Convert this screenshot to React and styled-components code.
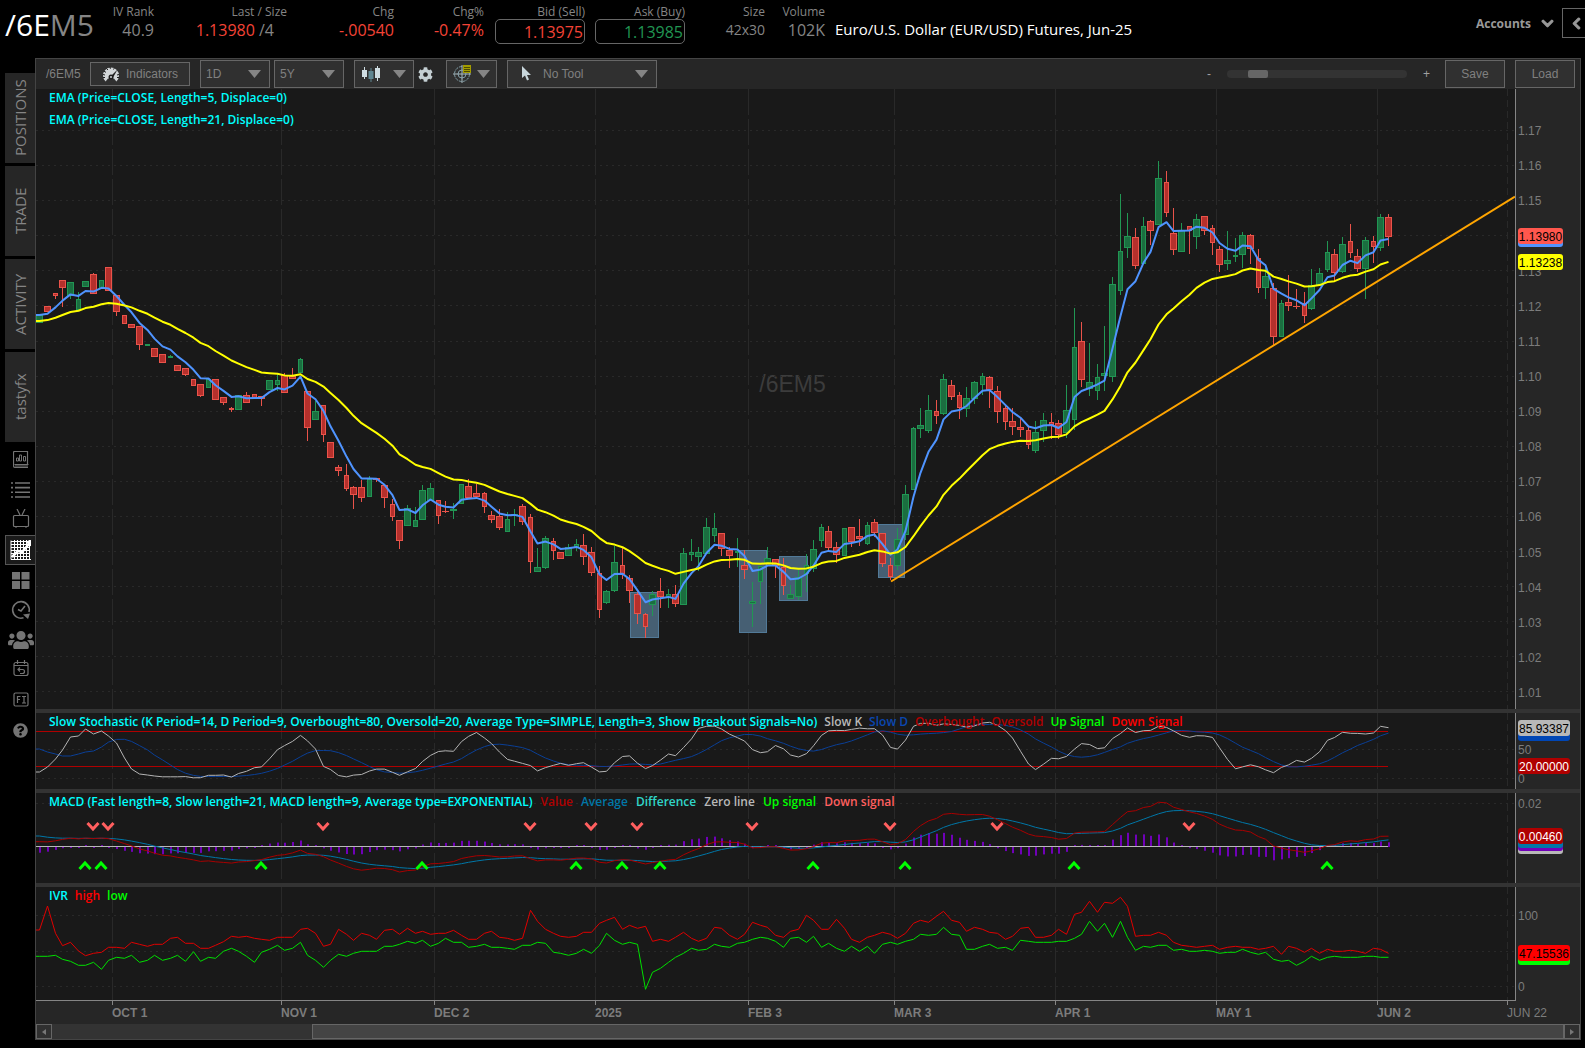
import React from 'react'
import styled, { createGlobalStyle } from 'styled-components'
import { FaChevronDown, FaChevronLeft, FaCog, FaQuestionCircle, FaUsers } from 'react-icons/fa'

// kind, high, body top, body bottom, low (all in plot rows)
const CANDLES = `
G 315 315 322 322|R 306 306 311 311|R 293 293 295 298|R 280 280 287 306|G 282 282 295 298|G 292 299 309 309
G 281 281 286 286|R 273 274 293 293|G 280 280 288 288|R 267 267 290 290|R 295 295 311 315|R 315 315 323 323
R 324 324 327 327|R 326 326 344 349|G 344 344 345 345|R 348 348 356 356|R 354 354 362 362|G 355 356 357 357
R 365 365 370 370|R 368 368 374 375|R 379 379 385 385|R 384 384 395 396|G 379 379 387 387|R 379 379 399 399
R 397 397 402 404|R 407 408 409 411|G 395 395 409 409|R 392 395 402 402|R 394 394 398 398|R 396 396 398 405
G 380 380 389 389|G 374 380 384 390|R 373 375 392 392|R 368 376 378 378|G 358 359 372 372
R 391 391 427 440|G 401 411 419 419|R 405 405 434 441|R 442 442 457 457|R 465 467 470 475|R 464 475 488 490
R 486 487 494 508|R 480 487 497 501|G 476 479 496 496|R 478 478 479 481|R 485 485 497 507|R 499 504 516 520
R 520 520 540 548|G 505 508 525 525|G 507 520 526 526|G 485 490 519 519|G 483 488 500 500|R 500 500 515 523
R 501 511 511 512|G 503 509 510 518|G 484 484 503 503|R 479 486 497 497|R 484 493 496 496|R 492 493 506 512
R 511 515 519 522|R 509 516 527 529|G 512 519 531 531|G 509 514 515 525|R 504 506 521 524|R 514 517 561 572
G 548 567 571 571|G 536 538 567 568|R 538 541 550 559|R 552 552 558 558|G 544 547 555 555|G 539 544 547 550
R 534 545 556 564|R 547 552 572 575|R 566 573 609 617|G 590 591 602 603|G 546 562 590 591|R 547 565 573 578
R 575 578 590 602|R 592 594 613 623|R 613 614 626 637|G 591 594 604 615|R 578 591 596 607|G 589 594 597 607
R 585 594 603 606|G 548 553 604 604|G 539 552 554 560|G 547 552 556 570|G 518 527 553 553|G 513 528 535 541
R 533 533 548 555|R 547 550 555 567|G 538 551 552 566|R 550 565 569 578|G 582 601 603 626|G 566 566 581 603
G 547 558 563 563|R 559 559 565 577|R 558 567 585 594|G 585 594 598 598|G 570 577 596 599|G 554 565 573 591
G 540 549 568 571|G 524 527 540 546|R 526 531 547 550|R 542 547 554 562|G 528 528 555 555|R 527 527 541 546
R 519 536 538 545|G 522 525 543 544|R 519 522 532 536|R 533 533 563 566|R 558 565 576 579|G 528 539 565 569
G 485 494 534 539|G 427 428 489 489|G 408 425 428 437|G 395 410 430 432|R 400 411 415 423|G 374 379 413 414
R 380 385 396 399|R 392 395 407 418|G 387 398 408 416|G 381 382 398 403|G 373 376 384 394|R 376 377 389 407
R 386 391 411 422|R 406 408 421 429|R 408 421 426 434|R 418 427 429 436|R 427 430 444 448|G 421 432 450 452
G 413 420 430 441|R 413 422 424 438|R 420 423 434 438|G 385 410 432 437|G 308 347 419 429|R 322 341 379 386
G 343 382 388 395|G 364 377 390 399|G 326 373 375 390|G 277 284 376 381|G 194 251 290 294|G 213 236 247 257
R 228 237 265 268|G 217 226 263 263|R 220 221 230 244|G 161 178 224 224|R 171 182 212 216|R 208 233 249 254
G 223 230 251 251|R 226 226 230 253|G 214 219 236 248|R 216 216 230 234|R 225 228 242 254|R 246 249 264 271
G 231 260 263 269|G 238 255 256 261|G 232 235 254 267|R 234 235 248 263|R 249 258 287 292|G 264 276 287 298
R 283 288 336 344|G 300 303 336 336|R 275 302 305 310|R 289 306 306 308|R 292 303 315 322|G 269 285 308 309
G 268 273 285 285|G 241 252 269 271|R 249 254 272 281|G 237 244 271 272|R 224 241 252 257|R 249 256 268 271
G 237 240 268 298|R 236 241 246 262|G 214 217 247 250|R 214 217 236 245`
  .trim()
  .split(/[|\n]/)
  .map((row) => {
    const [kind, ...rest] = row.split(' ')
    const [high, top, bottom, low] = rest.map(Number)
    return { up: kind === 'G', high, top, bottom, low, close: kind === 'G' ? top : bottom }
  })

// rows in thirds of a pixel, counted from y = 700
const IVR_HIGH = [
  690, 618, 700, 737, 727, 753, 767, 760, 757, 742, 742, 745, 727, 733, 739, 733, 733, 715, 712, 730,
  730, 745, 745, 736, 725, 709, 712, 709, 715, 718, 721, 712, 712, 712, 688, 685, 700, 739, 733, 688,
  703, 721, 700, 706, 718, 691, 688, 703, 685, 700, 694, 703, 700, 700, 691, 706, 718, 718, 700, 694,
  712, 715, 721, 715, 631, 664, 688, 700, 709, 712, 709, 697, 697, 670, 661, 652, 688, 676, 685, 679,
  724, 718, 724, 712, 697, 715, 724, 715, 682, 685, 706, 718, 703, 667, 676, 682, 706, 712, 694, 688,
  646, 661, 688, 688, 658, 685, 718, 727, 712, 706, 697, 703, 715, 700, 670, 661, 667, 649, 634, 661,
  667, 694, 682, 688, 697, 700, 718, 709, 685, 682, 712, 712, 706, 688, 703, 643, 637, 604, 637, 607,
  610, 592, 619, 709, 706, 706, 697, 706, 727, 736, 739, 742, 739, 736, 748, 742, 739, 742, 742, 748,
  745, 739, 763, 739, 745, 757, 745, 760, 748, 754, 754, 751, 754, 760, 745, 748, 760,
]
const IVR_LOW = [
  769, 769, 766, 778, 784, 796, 796, 787, 808, 781, 772, 775, 766, 787, 781, 766, 781, 775, 766, 784,
  755, 784, 772, 775, 754, 745, 754, 769, 787, 757, 748, 736, 751, 745, 727, 766, 781, 802, 781, 763,
  769, 760, 754, 754, 754, 739, 739, 733, 724, 730, 721, 739, 730, 715, 727, 727, 742, 739, 733, 742,
  742, 745, 748, 736, 736, 727, 730, 757, 760, 766, 760, 748, 760, 736, 700, 721, 733, 727, 733, 868,
  817, 805, 787, 772, 760, 745, 751, 748, 733, 739, 742, 730, 727, 718, 712, 715, 724, 742, 715, 712,
  727, 709, 742, 730, 745, 754, 739, 754, 739, 760, 733, 727, 733, 724, 718, 703, 706, 703, 682, 703,
  706, 748, 748, 739, 733, 745, 742, 751, 721, 724, 727, 727, 727, 724, 724, 715, 703, 664, 694, 670,
  712, 664, 712, 751, 739, 742, 736, 736, 751, 748, 754, 754, 751, 754, 760, 757, 757, 748, 757, 763,
  757, 778, 784, 781, 796, 784, 769, 781, 772, 769, 772, 772, 772, 769, 769, 772, 772,
]

const K_SEED = [772, 767, 759, 750, 737, 736, 729, 734, 731, 736, 743, 758, 769, 774, 775, 776]
const D_SEED = [749, 752, 754, 756, 756, 754, 752, 751, 747]

const DOWN_SIGNALS = [7, 9, 37, 64, 72, 78, 93, 111, 125, 150]
const UP_SIGNALS = [6, 8, 29, 50, 70, 76, 81, 101, 113, 135, 168]

const ZONES = [
  [630, 592, 28, 45],
  [739, 550, 27, 82],
  [779, 556, 28, 44],
  [878, 524, 26, 53],
]
const MONTHS = [112, 281, 434, 595, 748, 894, 1055, 1216, 1377]
const ZERO = 846

const xAt = (i) => Math.floor(39.75 + 7.6625 * i)
const closes = CANDLES.map((c) => c.close)

function ema(values, length, seed) {
  const k = 2 / (length + 1)
  let prev = seed
  return values.map((v, i) => {
    if (i > 0) prev = prev + k * (v - prev)
    return prev
  })
}

function average(values, end, length) {
  return values.slice(end - length + 1, end + 1).reduce((a, b) => a + b, 0) / length
}

const ema5 = ema(closes, 5, 315)
const ema21 = ema(closes, 21, 321)
const ema8 = ema(closes, 8, 314)
const macd = closes.map((_, i) => (ema21[i] - ema8[i]) * 0.613)
const macdAvg = ema(macd, 9, 10)

const fastK = CANDLES.map((c, i) => {
  const range = CANDLES.slice(Math.max(0, i - 13), i + 1)
  const high = Math.min(...range.map((r) => r.high))
  const low = Math.max(...range.map((r) => r.low))
  return 778 - ((low - c.close) / (low - high)) * 58.3
})
const slowK = CANDLES.map((_, i) => (i < K_SEED.length ? K_SEED[i] : average(fastK, i, 3)))
const slowD = CANDLES.map((_, i) => (i < D_SEED.length ? D_SEED[i] : average(slowK, i, 9)))

const toPoints = (values) =>
  `36,${values[0].toFixed(1)} ` + values.map((v, i) => `${xAt(i) + 0.5},${v.toFixed(1)}`).join(' ')

const GlobalStyle = createGlobalStyle`
    * {
        box-sizing: border-box;
    }
    body {
        margin: 0;
        background: #000;
        color: #858585;
        font-family: 'Open Sans', 'Noto Sans', sans-serif;
    }
    button, select {
        font: inherit;
        color: inherit;
        margin: 0;
    }
`
const Page = styled.div`
    display: flex;
    flex-direction: column;
    height: 100vh;
    min-height: 700px;
    overflow: hidden;
    background: #000;
`
const Header = styled.header`
    display: flex;
    align-items: flex-start;
    height: 58px;
    flex-shrink: 0;
`
const Symbol = styled.h1`
    width: 92px;
    margin: 0;
    padding-left: 5px;
    padding-top: 5px;
    font-size: 30px;
    line-height: 40px;
    font-weight: 400;
    color: #fff;
    span {
        color: #858585;
    }
`
const Stat = styled.div`
    display: flex;
    flex-direction: column;
    align-items: flex-end;
    width: ${(p) => p.$width}px;
    padding-top: 5px;
    white-space: nowrap;
`
const StatLabel = styled.span`
    font-size: 12px;
    line-height: 14px;
`
const StatValue = styled.span`
    font-size: ${(p) => (p.$small ? 14 : 16)}px;
    line-height: 22px;
    color: ${(p) => p.$color || '#858585'};
    padding-right: ${(p) => p.$inset || 0}px;
    span {
        color: #858585;
    }
`
const QuoteButton = styled.button`
    width: 90px;
    height: 25px;
    padding: 0 1px 0 0;
    text-align: right;
    font-size: 16px;
    line-height: 20px;
    color: ${(p) => p.$color};
    background: #000;
    border: 1px solid #666;
    border-radius: 5px;
`
const Quotes = styled.div`
    display: flex;
    gap: 10px;
    padding-left: 11px;
`
const Title = styled.h2`
    margin: 0;
    padding: 17px 0 0 10px;
    font-size: 15px;
    line-height: 24px;
    font-weight: 400;
    color: #fff;
    white-space: nowrap;
`
const AccountArea = styled.div`
    display: flex;
    align-items: center;
    gap: 8px;
    margin-left: auto;
    padding-top: 8px;
`
const AccountsButton = styled.button`
    display: flex;
    align-items: center;
    gap: 10px;
    padding: 0;
    border: 0;
    background: none;
    font-size: 12px;
    font-weight: 700;
    color: #999;
`
const CollapseButton = styled.button`
    display: flex;
    align-items: center;
    justify-content: flex-end;
    width: 23px;
    height: 30px;
    padding: 0 2px 0 0;
    border: 1px solid #666;
    border-right: 0;
    background: #000;
    color: #999;
    svg {
        stroke: currentColor;
        stroke-width: 40px;
    }
`
const Body = styled.div`
    display: flex;
    flex: 1;
    min-height: 0;
    padding: 0 4px 8px 5px;
`
const Sidebar = styled.nav`
    display: flex;
    flex-direction: column;
    gap: 3px;
    width: 30px;
    padding-top: 15px;
    flex-shrink: 0;
`
const SideTab = styled.button`
    width: 30px;
    height: 90px;
    padding: 0;
    border: 0;
    background: #262626;
    font-size: 15px;
    line-height: 30px;
    writing-mode: vertical-rl;
    transform: rotate(180deg);
`
const IconList = styled.div`
    display: flex;
    flex-direction: column;
`
const IconButton = styled.button`
    display: flex;
    align-items: center;
    justify-content: center;
    height: 30px;
    padding: 0;
    color: ${(p) => (p.$active ? '#fff' : '#747474')};
    background: ${(p) => (p.$active ? '#1a1a1a' : 'none')};
    border: 1px solid ${(p) => (p.$active ? '#555' : 'transparent')};
    border-right: 0;
`
const ChartPanel = styled.main`
    display: flex;
    flex-direction: column;
    flex: 1;
    min-width: 0;
    background: #262626;
    border: 1px solid #444;
`
const Toolbar = styled.div`
    display: flex;
    align-items: center;
    height: 30px;
    flex-shrink: 0;
    padding: 0 5px 0 10px;
    font-family: 'Liberation Sans', Arial, sans-serif;
    font-size: 12px;
    color: #808080;
`
const ToolSymbol = styled.span`
    width: 44px;
`
const ToolButton = styled.button`
    display: flex;
    align-items: center;
    justify-content: center;
    gap: 6px;
    width: ${(p) => p.$width}px;
    height: ${(p) => (p.$short ? 24 : 28)}px;
    margin-left: ${(p) => p.$gap || 0}px;
    padding: 0;
    background: #303030;
    border: 1px solid #666;
`
const GearButton = styled.button`
    display: flex;
    margin-left: 4px;
    padding: 0;
    border: 0;
    background: none;
    color: #c3ced2;
`
const SelectBox = styled.label`
    display: grid;
    align-items: center;
    width: ${(p) => p.$width}px;
    height: 28px;
    margin-left: ${(p) => p.$gap}px;
    background: #303030;
    border: 1px solid #666;
    > * {
        grid-area: 1 / 1;
    }
    > svg:last-child {
        justify-self: end;
        margin-right: 8px;
        pointer-events: none;
    }
    > svg:first-child {
        margin-left: 13px;
    }
`
const Select = styled.select`
    appearance: none;
    width: 100%;
    height: 100%;
    padding: 0 0 0 ${(p) => p.$indent || 5}px;
    border: 0;
    background: none;
`
const Zoom = styled.div`
    display: flex;
    align-items: center;
    gap: 16px;
    margin-left: auto;
    padding-right: 15px;
    color: #a0a0a0;
`
const Slider = styled.input`
    appearance: none;
    width: 180px;
    height: 8px;
    margin: 0;
    border-radius: 4px;
    background: #333;
    &::-webkit-slider-thumb {
        appearance: none;
        width: 20px;
        height: 8px;
        border-radius: 2px;
        background: #666;
    }
`
const Pane = styled.section`
    display: flex;
    ${(p) => (p.$height ? `height: ${p.$height}px; flex-shrink: 0;` : 'flex: 1; min-height: 0;')}
    border-bottom: ${(p) => (p.$last ? '0' : '4px solid #333')};
`
const Plot = styled.div`
    display: grid;
    grid-template-rows: minmax(0, 1fr);
    grid-template-columns: minmax(0, 1fr);
    flex: 1;
    min-width: 0;
    background: #191919;
    border-bottom: ${(p) => (p.$line ? '1px solid #858585' : '0')};
    > * {
        grid-area: 1 / 1;
    }
`
const Drawing = styled.svg`
    display: block;
    width: 100%;
    height: 100%;
`
const Legend = styled.div`
    z-index: 1;
    align-self: start;
    display: flex;
    flex-direction: ${(p) => (p.$stack ? 'column' : 'row')};
    gap: ${(p) => p.$gap}px;
    padding-left: 13px;
    font-size: 12px;
    line-height: 18px;
    font-weight: 600;
    white-space: nowrap;
`
const LegendItem = styled.span`
    color: ${(p) => p.$color || '#00ffff'};
`
const Watermark = styled.span`
    place-self: center;
    padding: 0 0 30px 34px;
    font-family: 'Liberation Sans', Arial, sans-serif;
    font-size: 23px;
    color: #3c3c3c;
`
const Axis = styled.div`
    position: relative;
    display: flex;
    flex-direction: column;
    justify-content: space-between;
    width: 65px;
    flex-shrink: 0;
    padding: ${(p) => p.$top}px 0 ${(p) => p.$bottom}px 2px;
    border-left: 1px solid #858585;
    font-family: 'Liberation Sans', Arial, sans-serif;
    font-size: 12px;
    line-height: 14px;
    color: #7c7c7c;
`
const Badge = styled.span`
    position: absolute;
    left: 2px;
    top: ${(p) => p.$top}px;
    width: ${(p) => (p.$wide ? 52 : 45)}px;
    height: 16px;
    border-radius: 3px;
    text-align: center;
    line-height: 18px;
    background: ${(p) => p.$bg};
    color: ${(p) => p.$color || '#000'};
`
const TimeAxis = styled.div`
    display: flex;
    height: 23px;
    flex-shrink: 0;
    font-family: 'Liberation Sans', Arial, sans-serif;
    font-size: 12px;
    font-weight: 700;
    color: #7c7c7c;
`
const TimeCell = styled.span`
    flex: ${(p) => p.$span} 1 0;
    min-width: 0;
    white-space: nowrap;
    line-height: 16px;
    font-weight: ${(p) => (p.$light ? 400 : 700)};
    &::before {
        content: '';
        display: block;
        width: 1px;
        height: 4px;
        background: ${(p) => (p.$blank ? 'none' : '#858585')};
    }
`
const ScrollBar = styled.div`
    display: flex;
    height: 15px;
    flex-shrink: 0;
    background: #333;
`
const ScrollButton = styled.button`
    display: flex;
    align-items: center;
    justify-content: center;
    width: 16px;
    padding: 0;
    background: #303030;
    border: 1px solid #666;
`
const ScrollThumb = styled.div`
    flex: 1252;
    background: #444;
    border: 1px solid #666;
`
const ScrollSpace = styled.div`
    flex: 260;
`

const Triangle = () => (
  <svg width="13" height="8" viewBox="0 0 13 8"><path d="M0 0h13L6.500 8z" fill="#858585" /></svg>
)

const GaugeIcon = () => (
  <svg width="18" height="16" viewBox="0 0 18 16">
    <path d="M3.600 15.500A8 8 0 1 1 14.400 15.500L12 12.500H6z" fill="#d2d6d8" />
    <path d="M1 11.500h2M1 8.500l2 .5M2 5.300l2 1M4.500 2.500L6 4M8 .8l.4 2M12.500 1.800l-1 1.700M17 8.500l-2 .5M17 11.500h-2" stroke="#1e1e1e" />
    <path d="M8 11l7.500-7.500L10.500 12.500z" fill="#1e1e1e" />
    <circle cx="9" cy="11" r="2.500" fill="#1e1e1e" />
    <circle cx="9" cy="11" r="1" fill="#d2d6d8" />
  </svg>
)

const CandleIcon = () => (
  <svg width="19" height="16" viewBox="0 0 19 16">
    <path d="M2.500 1v12M15.500 0v15" stroke="#cfdde2" />
    <path d="M0 4h5v7H0zM13 2h5v10h-5z" fill="#cfdde2" />
    <path d="M9 2v14" stroke="#5f8691" />
    <path d="M6.500 5h5v8h-5z" fill="#5f8691" />
  </svg>
)

const CrosshairIcon = () => (
  <svg width="18" height="18" viewBox="0 0 18 18" fill="none">
    <circle cx="9" cy="9" r="7.500" stroke="#7e9aa3" strokeDasharray="3 1" />
    <circle cx="9" cy="9" r="4" stroke="#7e9aa3" />
    <path d="M9 0v18M0 9h18" stroke="#a9bcc2" />
    <path d="M10 0h8v8h-8z" fill="#a39c00" />
    <path d="M11 2.500h6M11 4.500h6M11 6.500h6" stroke="#4b4800" />
  </svg>
)

const CursorIcon = () => (
  <svg width="10" height="16" viewBox="0 0 10 16"><path d="M1 0v12l3-2.500 2 5 2-1-2-4.500h4z" fill="#c8d6dc" /></svg>
)

const ReportIcon = () => (
  <svg width="16" height="18" viewBox="0 0 16 18" fill="none" stroke="currentColor">
    <path d="M.5 14.500V1.500q0-1 1-1h13V13.500M1.500 13.500h14M.5 14.500q0 2 1.500 2h13M2 15h13" strokeWidth="1.200" />
    <path d="M3.500 10v-3h2v3zM6.500 10V4h2v6zM10.500 10V5.500h2V10z" />
  </svg>
)
const ListIcon = () => (
  <svg width="19" height="16" viewBox="0 0 19 16" stroke="currentColor" strokeWidth="1.600">
    <path d="M0 1h2M4 1h15M0 5.600h2M4 5.600h15M0 10.200h2M4 10.200h15M0 15h2M4 15h15" />
  </svg>
)
const TvIcon = () => (
  <svg width="18" height="22" viewBox="0 0 18 22" fill="none" stroke="currentColor" strokeWidth="1.200">
    <rect x="1.500" y="6.500" width="15" height="11" rx="1" />
    <path d="M5 0l3 6M13 0l-3 6M3 18h2M13 18h2" />
  </svg>
)
const ChartIcon = () => (
  <svg width="21" height="20" viewBox="0 0 21 20" fill="none" stroke="currentColor">
    <path d="M1 .5v19h20M1 1.500h19M1 4.500h19M1 7.500h19M1 10.500h19M1 13.500h19M1 16.500h19M4.500 0v19M7.500 0v19M10.500 0v19M13.500 0v19M16.500 0v19M19.500 0v19" />
    <path d="M2 17l6-6 4 1 7-8" strokeWidth="2.500" />
    <path d="M21 0v6l-5-4z" fill="currentColor" />
  </svg>
)
const TilesIcon = () => (
  <svg width="18" height="17" viewBox="0 0 18 17" fill="currentColor">
    <path d="M0 0h8v7.500H0zM9.500 0h8v7.500h-8zM0 9h8v8H0zM9.500 9h8v8h-8z" />
  </svg>
)
const ClockIcon = () => (
  <svg width="20" height="20" viewBox="0 0 20 20" fill="none" stroke="currentColor" strokeWidth="1.600">
    <path d="M12.500 17.800A8.300 8.300 0 1 1 18 12" />
    <path d="M14 6l-4 5-3-1.500" />
    <path d="M12 14.500l7-1-2 5.500z" fill="currentColor" stroke="none" />
  </svg>
)
const CalendarIcon = () => (
  <svg width="16" height="20" viewBox="0 0 16 20" fill="none" stroke="currentColor" strokeWidth="1.200">
    <rect x="1" y="2.500" width="14" height="13" rx="2" />
    <path d="M1 5.500h14M4.500 0v4M11.500 0v4M7 7.500l-2 2 2 2M5 9.500h4.500a2 2 0 0 1 0 4H7" />
  </svg>
)
const FiIcon = () => (
  <svg width="16" height="16" viewBox="0 0 16 16" fill="none" stroke="currentColor" strokeWidth="1.200">
    <rect x="1" y="1" width="14" height="13" rx="1.500" />
    <path d="M7.500 4.500H4.500v6.500M4.500 7.500h2.500M9 4.500h4M9 11h4M11 4.500v6.500" />
  </svg>
)

const SIDE_ICONS = [
  ['Reports', <ReportIcon />],
  ['Watchlist', <ListIcon />],
  ['Video', <TvIcon />],
  ['Chart', <ChartIcon />],
  ['Grid', <TilesIcon />],
  ['Quick trade', <ClockIcon />],
  ['Follow', <FaUsers size={26} />],
  ['Calendar', <CalendarIcon />],
  ['Fixed income', <FiIcon />],
  ['Help', <FaQuestionCircle size={15} />],
]

function Grid({ rows, top, bottom }) {
  return (
    <g stroke="#292929" shapeRendering="crispEdges">
      {rows.map((y) => (
        <line key={y} x1="36" x2="1515" y1={y + 0.5} y2={y + 0.5} strokeDasharray="2 4" />
      ))}
      {MONTHS.map((x) => (
        <line key={x} x1={x + 0.5} x2={x + 0.5} y1={top} y2={bottom} strokeDasharray="26 4" />
      ))}
      <line x1="1507.5" x2="1507.5" y1={top} y2={bottom} strokeDasharray="7 4" />
    </g>
  )
}

function Line({ values, color, width = 1 }) {
  return <polyline points={toPoints(values)} fill="none" stroke={color} strokeWidth={width} strokeLinejoin="round" />
}

function Candle({ candle, index }) {
  const x = xAt(index)
  const half = xAt(index + 1) - x === 7 ? 2 : 3
  const stroke = candle.up ? '#219653' : '#ea534a'
  return (
    <g shapeRendering="crispEdges">
      <rect x={x} y={candle.high} width="1" height={candle.low - candle.high + 1} fill={stroke} />
      <rect
        x={x - half + 0.5}
        y={candle.top + 0.5}
        width={half * 2}
        height={Math.max(0.1, candle.bottom - candle.top)}
        fill={candle.up ? '#1b6e40' : '#b5302c'}
        stroke={stroke}
      />
    </g>
  )
}

function Quote({ label, value, color }) {
  return (
    <Stat $width={90}>
      <StatLabel>{label}</StatLabel>
      <QuoteButton $color={color}>{value}</QuoteButton>
    </Stat>
  )
}

const PRICES = Array.from({ length: 17 }, (_, i) => (1.17 - i * 0.01).toFixed(2))
const PRICE_ROWS = PRICES.map((_, i) => Math.round(130 + i * 35.09))
const TIMES = [
  ['', 76], ['OCT 1', 169], ['NOV 1', 153], ['DEC 2', 161], ['2025', 153], ['FEB 3', 146],
  ['MAR 3', 161], ['APR 1', 161], ['MAY 1', 161], ['JUN 2', 130], ['JUN 22', 73],
]

export default function App() {
  return (
    <Page>
      <GlobalStyle />
      <Header>
        <Symbol>/6E<span>M5</span></Symbol>
        <Stat $width={62}>
          <StatLabel>IV Rank</StatLabel>
          <StatValue>40.9</StatValue>
        </Stat>
        <Stat $width={133}>
          <StatLabel>Last / Size</StatLabel>
          <StatValue $color="#f44336" $inset={13}>1.13980 <span>/4</span></StatValue>
        </Stat>
        <Stat $width={107}>
          <StatLabel>Chg</StatLabel>
          <StatValue $color="#f44336">-.00540</StatValue>
        </Stat>
        <Stat $width={90}>
          <StatLabel>Chg%</StatLabel>
          <StatValue $color="#f44336">-0.47%</StatValue>
        </Stat>
        <Quotes>
          <Quote label="Bid (Sell)" value="1.13975" color="#f44336" />
          <Quote label="Ask (Buy)" value="1.13985" color="#219653" />
        </Quotes>
        <Stat $width={80}>
          <StatLabel>Size</StatLabel>
          <StatValue $small>42x30</StatValue>
        </Stat>
        <Stat $width={60}>
          <StatLabel>Volume</StatLabel>
          <StatValue>102K</StatValue>
        </Stat>
        <Title>Euro/U.S. Dollar (EUR/USD) Futures, Jun-25</Title>
        <AccountArea>
          <AccountsButton>Accounts <FaChevronDown size={13} stroke="currentColor" strokeWidth={40} /></AccountsButton>
          <CollapseButton aria-label="Collapse"><FaChevronLeft size={13} /></CollapseButton>
        </AccountArea>
      </Header>
      <Body>
        <Sidebar>
          <SideTab>POSITIONS</SideTab>
          <SideTab>TRADE</SideTab>
          <SideTab>ACTIVITY</SideTab>
          <SideTab>tastyfx</SideTab>
          <IconList>
            {SIDE_ICONS.map(([name, icon]) => (
              <IconButton key={name} aria-label={name} $active={name === 'Chart'}>{icon}</IconButton>
            ))}
          </IconList>
        </Sidebar>
        <ChartPanel>
          <Toolbar>
            <ToolSymbol>/6EM5</ToolSymbol>
            <ToolButton $width={100} $short><GaugeIcon />Indicators</ToolButton>
            <SelectBox $width={70} $gap={10}>
              <Select aria-label="Interval"><option>1D</option></Select>
              <Triangle />
            </SelectBox>
            <SelectBox $width={70} $gap={4}>
              <Select aria-label="Range"><option>5Y</option></Select>
              <Triangle />
            </SelectBox>
            <ToolButton $width={60} $gap={10} aria-label="Chart type"><CandleIcon /><span /><Triangle /></ToolButton>
            <GearButton aria-label="Settings"><FaCog size={15} /></GearButton>
            <ToolButton $width={51} $gap={13} aria-label="Crosshair"><CrosshairIcon /><Triangle /></ToolButton>
            <SelectBox $width={150} $gap={10}>
              <CursorIcon />
              <Select aria-label="Tool" $indent={35}><option>No Tool</option></Select>
              <Triangle />
            </SelectBox>
            <Zoom>
              <span>-</span>
              <Slider type="range" aria-label="Zoom" min="0" max="100" defaultValue="13" />
              <span>+</span>
            </Zoom>
            <ToolButton $width={60}>Save</ToolButton>
            <ToolButton $width={60} $gap={10}>Load</ToolButton>
          </Toolbar>

          <Pane>
            <Plot>
              <Watermark>/6EM5</Watermark>
              <Drawing viewBox="36 89 1479 620" preserveAspectRatio="none">
                <Grid rows={PRICE_ROWS} top={89} bottom={709} />
                {ZONES.map(([x, y, w, h]) => (
                  <rect key={x} x={x + 0.5} y={y + 0.5} width={w} height={h} fill="#465f73" stroke="#527a98" />
                ))}
                {CANDLES.map((c, i) => <Candle key={i} candle={c} index={i} />)}
                <Line values={ema5} color="#4f94ff" width={2} />
                <Line values={ema21} color="#ffff00" width={2} />
                <line x1="891" y1="581.500" x2="1515" y2="196.500" stroke="#ffa500" strokeWidth="2" />
              </Drawing>
              <Legend $stack $gap={4}>
                <LegendItem>EMA (Price=CLOSE, Length=5, Displace=0)</LegendItem>
                <LegendItem>EMA (Price=CLOSE, Length=21, Displace=0)</LegendItem>
              </Legend>
            </Plot>
            <Axis $top={35} $bottom={9}>
              {PRICES.map((p) => <span key={p}>{p}</span>)}
              <Badge $top={142} $bg="#4f94ff" />
              <Badge $top={139} $bg="#ff574d">1.13980</Badge>
              <Badge $top={165} $bg="#ffff00">1.13238</Badge>
            </Axis>
          </Pane>

          <Pane $height={80}>
            <Plot>
              <Drawing viewBox="36 713 1479 76" preserveAspectRatio="none">
                <Grid rows={[749, 778]} top={713} bottom={789} />
                <path d="M36 731.500H1388M36 766.500H1388" stroke="#b00000" shapeRendering="crispEdges" />
                <Line values={slowD} color="#0a3f96" />
                <Line values={slowK} color="#b4b4b4" />
              </Drawing>
              <Legend $gap={7}>
                <LegendItem>Slow Stochastic (K Period=14, D Period=9, Overbought=80, Oversold=20, Average Type=SIMPLE, Length=3, Show Breakout Signals=No)</LegendItem>
                <LegendItem $color="#b8b8b8">Slow K</LegendItem>
                <LegendItem $color="#0a47b0">Slow D</LegendItem>
                <LegendItem $color="#b00000">Overbought</LegendItem>
                <LegendItem $color="#b00000">Oversold</LegendItem>
                <LegendItem $color="#00ff00">Up Signal</LegendItem>
                <LegendItem $color="#ff0000">Down Signal</LegendItem>
              </Legend>
            </Plot>
            <Axis $top={30} $bottom={3}>
              <span>50</span>
              <span>0</span>
              <Badge $wide $top={12} $bg="#0046b5" />
              <Badge $wide $top={7} $bg="#b8b8b8">85.93387</Badge>
              <Badge $wide $top={45} $bg="#b00000" $color="#fff">20.00000</Badge>
            </Axis>
          </Pane>

          <Pane $height={94}>
            <Plot>
              <Drawing viewBox="36 793 1479 90" preserveAspectRatio="none">
                <Grid rows={[803]} top={793} bottom={883} />
                {macd.map((v, i) => {
                  const d = v - macdAvg[i]
                  const h = Math.max(1, Math.abs(d))
                  return <rect key={i} x={xAt(i)} y={d > 0 ? ZERO - h : ZERO} width="2" height={h + 1} fill="#7000b8" />
                })}
                <path d="M36 846.500H1388" stroke="#b8b8b8" shapeRendering="crispEdges" />
                <Line values={macdAvg.map((v) => ZERO - v)} color="#0077a8" />
                <Line values={macd.map((v) => ZERO - v)} color="#a80000" />
                {DOWN_SIGNALS.map((i) => (
                  <path key={i} d={`M${xAt(i) - 5.5} 823l5.500 6 5.500-6`} fill="none" stroke="#ff5f5f" strokeWidth="3" />
                ))}
                {UP_SIGNALS.map((i) => (
                  <path key={i} d={`M${xAt(i) - 5.5} 869l5.500-6 5.500 6`} fill="none" stroke="#00ff00" strokeWidth="3" />
                ))}
              </Drawing>
              <Legend $gap={8}>
                <LegendItem>MACD (Fast length=8, Slow length=21, MACD length=9, Average type=EXPONENTIAL)</LegendItem>
                <LegendItem $color="#b00000">Value</LegendItem>
                <LegendItem $color="#0077a8">Average</LegendItem>
                <LegendItem $color="#30d5c8">Difference</LegendItem>
                <LegendItem $color="#b8b8b8">Zero line</LegendItem>
                <LegendItem $color="#00ff00">Up signal</LegendItem>
                <LegendItem $color="#ff5f5f">Down signal</LegendItem>
              </Legend>
            </Plot>
            <Axis $top={4} $bottom={0}>
              <span>0.02</span>
              <Badge $top={45} $bg="#b8b8b8" />
              <Badge $top={42} $bg="#7000b8" />
              <Badge $top={39} $bg="#0077a8" />
              <Badge $top={35} $bg="#b00000" $color="#fff">0.00460</Badge>
            </Axis>
          </Pane>

          <Pane $height={114} $last>
            <Plot $line>
              <Drawing viewBox="36 887 1479 113" preserveAspectRatio="none">
                <Grid rows={[915, 951, 986]} top={887} bottom={1000} />
                <Line values={IVR_HIGH.map((v) => 700 + v / 3)} color="#e00000" />
                <Line values={IVR_LOW.map((v) => 700 + v / 3)} color="#00e000" />
              </Drawing>
              <Legend $gap={7}>
                <LegendItem>IVR</LegendItem>
                <LegendItem $color="#ff0000">high</LegendItem>
                <LegendItem $color="#00ff00">low</LegendItem>
              </Legend>
            </Plot>
            <Axis $top={22} $bottom={7}>
              <span>100</span>
              <span>0</span>
              <Badge $wide $top={62} $bg="#00ff00" />
              <Badge $wide $top={58} $bg="#ff0000">47.15536</Badge>
            </Axis>
          </Pane>

          <TimeAxis>
            {TIMES.map(([text, span]) => (
              <TimeCell key={text} $span={span} $blank={!text} $light={text === 'JUN 22'}>{text}</TimeCell>
            ))}
          </TimeAxis>
          <ScrollBar>
            <ScrollButton aria-label="Scroll left"><svg width="4" height="6"><path d="M4 0v6L0 3z" fill="#777" /></svg></ScrollButton>
            <ScrollSpace />
            <ScrollThumb />
            <ScrollButton aria-label="Scroll right"><svg width="4" height="6"><path d="M0 0v6l4-3z" fill="#777" /></svg></ScrollButton>
          </ScrollBar>
        </ChartPanel>
      </Body>
    </Page>
  )
}
